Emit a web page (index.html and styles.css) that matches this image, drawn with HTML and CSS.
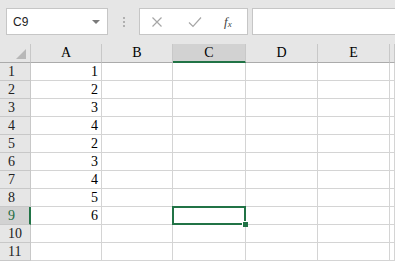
FILE: index.html
```html
<!DOCTYPE html>
<html lang="zh-CN">
<head>
    <meta charset="UTF-8">
    <title>Sheet</title>
    <link rel="stylesheet" href="styles.css">
</head>
<body>
    <div class="formula-bar">
        <div class="name-box">
            <span class="name-text">C9</span>
            <span class="name-arrow"></span>
        </div>
        <div class="grip"><i></i><i></i><i></i></div>
        <div class="fx-buttons">
            <svg class="btn-icon" width="12" height="12" viewBox="0 0 12 12"><path d="M1.5 1.5 L10.5 10.5 M10.5 1.5 L1.5 10.5" stroke="#a6a6a6" stroke-width="1.2" fill="none"/></svg>
            <svg class="btn-icon" width="14" height="12" viewBox="0 0 14 12"><path d="M1 6.5 L5 10.5 L13 1.5" stroke="#a6a6a6" stroke-width="1.2" fill="none"/></svg>
            <span class="fx">f<sub>x</sub></span>
        </div>
        <div class="formula-input"></div>
    </div>

    <div class="sheet">
        <div class="row head">
            <div class="rh corner"><span class="tri"></span></div>
            <div class="ch">A</div>
            <div class="ch">B</div>
            <div class="ch active">C</div>
            <div class="ch">D</div>
            <div class="ch">E</div>
            <div class="ch">&nbsp;</div>
        </div>
        <div class="row"><div class="rh">1</div><div class="c num">1</div><div class="c"></div><div class="c"></div><div class="c"></div><div class="c"></div><div class="c"></div></div>
        <div class="row"><div class="rh">2</div><div class="c num">2</div><div class="c"></div><div class="c"></div><div class="c"></div><div class="c"></div><div class="c"></div></div>
        <div class="row"><div class="rh">3</div><div class="c num">3</div><div class="c"></div><div class="c"></div><div class="c"></div><div class="c"></div><div class="c"></div></div>
        <div class="row"><div class="rh">4</div><div class="c num">4</div><div class="c"></div><div class="c"></div><div class="c"></div><div class="c"></div><div class="c"></div></div>
        <div class="row"><div class="rh">5</div><div class="c num">2</div><div class="c"></div><div class="c"></div><div class="c"></div><div class="c"></div><div class="c"></div></div>
        <div class="row"><div class="rh">6</div><div class="c num">3</div><div class="c"></div><div class="c"></div><div class="c"></div><div class="c"></div><div class="c"></div></div>
        <div class="row"><div class="rh">7</div><div class="c num">4</div><div class="c"></div><div class="c"></div><div class="c"></div><div class="c"></div><div class="c"></div></div>
        <div class="row"><div class="rh">8</div><div class="c num">5</div><div class="c"></div><div class="c"></div><div class="c"></div><div class="c"></div><div class="c"></div></div>
        <div class="row"><div class="rh active">9</div><div class="c num">6</div><div class="c"></div><div class="c selected"></div><div class="c"></div><div class="c"></div><div class="c"></div></div>
        <div class="row"><div class="rh">10</div><div class="c"></div><div class="c"></div><div class="c"></div><div class="c"></div><div class="c"></div><div class="c"></div></div>
        <div class="row"><div class="rh">11</div><div class="c"></div><div class="c"></div><div class="c"></div><div class="c"></div><div class="c"></div><div class="c"></div></div>
    </div>
</body>
</html>
```

FILE: styles.css
```css
body {
    margin: 0;
    background: #ffffff;
    font-family: 'Liberation Serif', 'DejaVu Serif', serif;
    overflow: hidden;
}

.formula-bar {
    height: 44px;
    background: #e6e6e6;
    display: flex;
    align-items: flex-start;
    padding-top: 8px;
    box-sizing: border-box;
}

.name-box {
    margin-left: 6px;
    width: 102px;
    height: 27px;
    background: #fff;
    border: 1px solid #c6c6c6;
    box-sizing: border-box;
    display: flex;
    align-items: center;
    justify-content: space-between;
    padding: 0 7px 0 6px;
}

.name-text {
    font-family: 'Liberation Sans', Arial, sans-serif;
    font-size: 12px;
    color: #222;
}

.name-arrow {
    width: 0;
    height: 0;
    border-left: 4px solid transparent;
    border-right: 4px solid transparent;
    border-top: 4px solid #7a7a7a;
}

.grip {
    width: 31px;
    height: 27px;
    display: flex;
    flex-direction: column;
    align-items: center;
    justify-content: center;
    gap: 2px;
}

.grip i {
    width: 2px;
    height: 2px;
    background: #b0b0b0;
}

.fx-buttons {
    width: 109px;
    height: 27px;
    background: #fff;
    border: 1px solid #c6c6c6;
    box-sizing: border-box;
    display: flex;
    align-items: center;
    padding-left: 11px;
    gap: 25px;
}

.fx {
    font-family: 'Liberation Serif', serif;
    font-style: italic;
    font-size: 13px;
    color: #444;
    margin-left: -3px;
}

.fx sub {
    font-size: 9px;
    vertical-align: -1px;
}

.formula-input {
    flex: 1;
    margin-left: 4px;
    height: 27px;
    background: #fff;
    border: 1px solid #c6c6c6;
    border-right: none;
    box-sizing: border-box;
}

.sheet {
    font-size: 14px;
    color: #000;
}

.row {
    display: flex;
    height: 18px;
}

.row.head {
    height: 19px;
}

.rh, .ch, .c {
    box-sizing: border-box;
    flex: none;
    line-height: 17px;
}

.rh {
    width: 31px;
    background: #e6e6e6;
    border-right: 1px solid #c8c8c8;
    border-bottom: 1px solid #c8c8c8;
    padding-left: 8px;
    color: #222;
}

.rh.active {
    background: #d2d2d2;
    color: #1e6b41;
    border-right: 2px solid #217346;
}

.corner {
    position: relative;
    border-bottom: 1px solid #ababab;
}

.tri {
    position: absolute;
    right: 4px;
    bottom: 3px;
    width: 0;
    height: 0;
    border-left: 10px solid transparent;
    border-bottom: 10px solid #b8b8b8;
}

.ch {
    width: 71px;
    background: #e6e6e6;
    border-right: 1px solid #c8c8c8;
    border-bottom: 1px solid #ababab;
    text-align: center;
    line-height: 18px;
}

.ch:nth-child(4) { width: 73px; }
.ch:nth-child(5) { width: 72px; }
.ch:nth-child(6) { width: 72px; }
.ch:nth-child(7) { flex: 1; }

.ch.active {
    background: #d2d2d2;
    border-bottom: 2px solid #217346;
}

.c {
    width: 71px;
    border-right: 1px solid #d4d4d4;
    border-bottom: 1px solid #d4d4d4;
}

.c:nth-child(4) { width: 73px; }
.c:nth-child(5) { width: 72px; }
.c:nth-child(6) { width: 72px; }
.c:nth-child(7) { flex: 1; }

.num {
    text-align: right;
    padding-right: 3px;
}

.selected {
    position: relative;
}

.selected::after {
    content: "";
    position: absolute;
    left: -1px;
    top: -1px;
    right: -1px;
    bottom: -1px;
    border: 2px solid #217346;
}

.selected::before {
    content: "";
    position: absolute;
    right: -3px;
    bottom: -3px;
    width: 5px;
    height: 5px;
    background: #217346;
    border-left: 1px solid #fff;
    border-top: 1px solid #fff;
    z-index: 1;
}
```
